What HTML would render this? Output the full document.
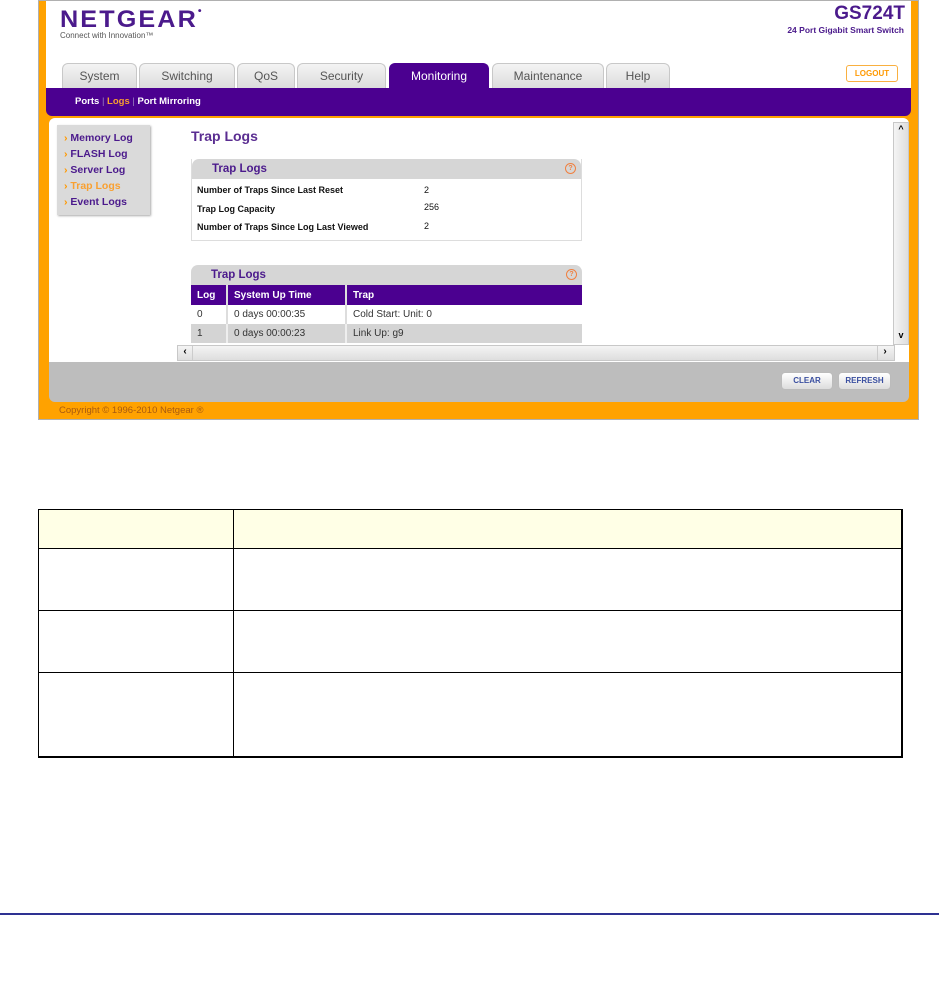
<!DOCTYPE html>
<html><head><meta charset="utf-8"><style>
*{margin:0;padding:0;box-sizing:border-box}
body{width:939px;height:984px;background:#fff;position:relative;font-family:"Liberation Sans",sans-serif;overflow:hidden}
.a{position:absolute}
.tab{position:absolute;top:63px;height:25px;background:linear-gradient(#f4f4f4,#dcdcdc);border:1px solid #c8c8c8;border-bottom:none;border-radius:6px 6px 0 0;color:#555;font-size:12px;text-align:center;line-height:25px}
.mi{position:absolute;left:64px;font-size:10.5px;font-weight:bold;color:#4b1a8c}
.mi:before{content:"› ";color:#f90}
.b{font-size:9px;font-weight:bold;color:#111}
.hd{background:#d6d6d6;border-radius:7px 7px 0 0;height:20px;color:#4b1a8c;font-weight:bold;font-size:11.5px;line-height:20px;padding-left:20px}
.q{position:absolute;right:5px;top:4px;width:11px;height:11px;border:1px solid #f08040;border-radius:50%;font-size:7px;line-height:9px;color:#f08040;text-align:center}
td{font-size:10px}
.btn{position:absolute;top:372px;height:18px;border:1px solid #bbb;border-radius:4px;background:linear-gradient(#fff,#ddd);color:#3a4fa0;font-size:8px;font-weight:bold;text-align:center;line-height:16px}
</style></head><body>
<div class="a" style="left:38px;top:0;width:881px;height:420px;background:#ffa200;border:1px solid #b0b0b0"></div>
<div class="a" style="left:46px;top:1px;width:865px;height:88px;background:#fff"></div>
<div class="a" style="left:60px;top:6px;font-size:24px;font-weight:900;color:#4b1a8c;letter-spacing:2px;transform:scaleX(1.05);transform-origin:left">NETGEAR<span style="font-size:10px;vertical-align:top">•</span></div>
<div class="a" style="left:60px;top:31px;font-size:8px;color:#555">Connect with Innovation™</div>
<div class="a" style="right:34px;top:3px;font-size:19px;font-weight:bold;color:#4b1a8c">GS724T</div>
<div class="a" style="right:35px;top:25px;font-size:8.5px;font-weight:bold;color:#4b1a8c">24 Port Gigabit Smart Switch</div>
<div class="tab" style="left:62px;width:75px">System</div>
<div class="tab" style="left:139px;width:96px">Switching</div>
<div class="tab" style="left:237px;width:58px">QoS</div>
<div class="tab" style="left:297px;width:89px">Security</div>
<div class="tab" style="left:389px;width:100px;background:#4b0090;border-color:#4b0090;color:#fff">Monitoring</div>
<div class="tab" style="left:492px;width:112px">Maintenance</div>
<div class="tab" style="left:606px;width:64px">Help</div>
<div class="a" style="left:846px;top:65px;width:52px;height:17px;border:1px solid #f9b040;border-radius:3px;color:#f90;font-size:8px;font-weight:bold;text-align:center;line-height:15px">LOGOUT</div>
<div class="a" style="left:46px;top:88px;width:865px;height:28px;background:#4b0090;border-radius:0 0 6px 6px"></div>
<div class="a" style="left:75px;top:96px;font-size:9.5px;font-weight:bold;color:#fff">Ports <span style="color:#9a80c0;font-weight:normal">|</span> <span style="color:#f9a030">Logs</span> <span style="color:#9a80c0;font-weight:normal">|</span> Port Mirroring</div>
<div class="a" style="left:49px;top:118px;width:860px;height:284px;background:#bdbdbd;border-radius:6px"></div>
<div class="a" style="left:49px;top:118px;width:860px;height:244px;background:#fff;border-radius:6px 6px 0 0"></div>
<div class="a" style="left:59px;top:405px;font-size:9.5px;color:#a85a10">Copyright © 1996-2010 Netgear ®</div>
<div class="a" style="left:57px;top:125px;width:93px;height:90px;background:#dadada;box-shadow:1px 1px 2px #aaa"></div>
<div class="mi" style="top:132px">Memory Log</div>
<div class="mi" style="top:148px">FLASH Log</div>
<div class="mi" style="top:164px">Server Log</div>
<div class="mi" style="top:180px;color:#f9a030">Trap Logs</div>
<div class="mi" style="top:196px">Event Logs</div>
<div class="a" style="left:191px;top:128px;font-size:14px;font-weight:bold;color:#5a2d91">Trap Logs</div>
<div class="a" style="left:191px;top:159px;width:391px;height:82px;border:1px solid #ddd;border-top:none">
<div class="hd" style="position:relative">Trap Logs<div class="q">?</div></div>
<div class="a b" style="left:5px;top:26px">Number of Traps Since Last Reset</div>
<div class="a b" style="left:232px;top:26px;font-weight:normal">2</div>
<div class="a b" style="left:5px;top:45px">Trap Log Capacity</div>
<div class="a b" style="left:232px;top:43px;font-weight:normal">256</div>
<div class="a b" style="left:5px;top:63px">Number of Traps Since Log Last Viewed</div>
<div class="a b" style="left:232px;top:62px;font-weight:normal">2</div>
</div>
<div class="a" style="left:191px;top:265px;width:391px">
<div class="hd" style="position:relative">Trap Logs<div class="q">?</div></div>
<table style="border-collapse:collapse;width:391px">
<tr style="background:#4b0090;color:#fff;height:20px"><td style="width:36px;font-weight:bold;padding-left:6px;border-right:2px solid #ddd">Log</td><td style="width:119px;font-weight:bold;padding-left:6px;border-right:2px solid #ddd">System Up Time</td><td style="font-weight:bold;padding-left:6px">Trap</td></tr>
<tr style="height:19px;color:#333"><td style="padding-left:6px;border-right:2px solid #ddd">0</td><td style="padding-left:6px;border-right:2px solid #ddd">0 days 00:00:35</td><td style="padding-left:6px">Cold Start: Unit: 0</td></tr>
<tr style="height:19px;background:#d4d4d4;color:#333"><td style="padding-left:6px;border-right:2px solid #eee">1</td><td style="padding-left:6px;border-right:2px solid #eee">0 days 00:00:23</td><td style="padding-left:6px">Link Up: g9</td></tr>
</table></div>
<div class="a" style="left:177px;top:345px;width:718px;height:16px;background:linear-gradient(#f4f4f4,#dedede);border:1px solid #c8c8c8"></div>
<div class="a" style="left:178px;top:346px;width:15px;height:14px;font-size:10px;font-weight:bold;text-align:center;border-right:1px solid #ccc">‹</div>
<div class="a" style="left:877px;top:346px;width:15px;height:14px;font-size:10px;font-weight:bold;text-align:center;border-left:1px solid #ccc">›</div>
<div class="a" style="left:893px;top:122px;width:16px;height:223px;background:linear-gradient(90deg,#f4f4f4,#dedede);border:1px solid #c8c8c8"></div>
<div class="a" style="left:894px;top:124px;width:14px;height:14px;font-size:9px;font-weight:bold;text-align:center">^</div>
<div class="a" style="left:894px;top:330px;width:14px;height:14px;font-size:9px;font-weight:bold;text-align:center">v</div>
<div class="btn" style="left:781px;width:52px">CLEAR</div>
<div class="btn" style="left:838px;width:53px">REFRESH</div>
<div class="a" style="left:38px;top:509px;width:865px;height:249px;border:1px solid #000;border-width:1px 2px 2px 1px"></div>
<div class="a" style="left:39px;top:510px;width:862px;height:39px;background:#ffffe6;border-bottom:1px solid #000"></div>
<div class="a" style="left:39px;top:610px;width:862px;height:1px;background:#000"></div>
<div class="a" style="left:39px;top:672px;width:862px;height:1px;background:#000"></div>
<div class="a" style="left:233px;top:510px;width:1px;height:246px;background:#000"></div>
<div class="a" style="left:0;top:913px;width:939px;height:2px;background:#2e3192"></div>
</body></html>
